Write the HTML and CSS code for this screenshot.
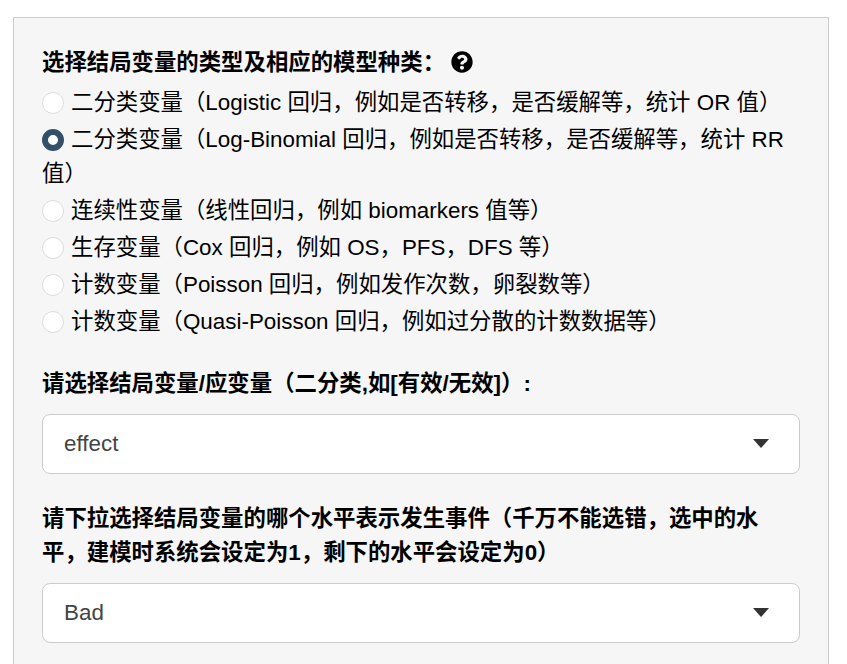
FILE: index.html
```html
<!DOCTYPE html>
<html lang="zh">
<head>
    <meta charset="UTF-8">
    <meta name="viewport" content="width=device-width, initial-scale=1.0">
    <title>模型设置</title>
    <link rel="stylesheet" href="styles.css">
</head>
<body>

    <div class="well">
        <div class="form-group">
            <label class="control-label">选择结局变量的类型及相应的模型种类：
                <svg class="help-icon" viewBox="0 0 512 512" aria-hidden="true"><path d="M504 256c0 137-111 248-248 248S8 393 8 256 119 8 256 8s248 111 248 248zM263 90c-54 0-89 23-116 64-4 5-3 12 3 16l35 26c5 4 13 3 17-2 18-23 30-36 58-36 21 0 46 13 46 33 0 15-12 23-33 34-23 13-55 30-55 72v6c0 7 5 12 12 12h56c7 0 12-5 12-12v-2c0-29 85-30 85-109 0-59-61-102-120-102zm-7 254c-26 0-47 21-47 47s21 47 47 47 47-21 47-47-21-47-47-47z"/></svg>
            </label>
            <div class="radio-list">
                <div class="radio"><span class="radio-dot"></span>二分类变量（Logistic 回归，例如是否转移，是否缓解等，统计 OR 值）</div>
                <div class="radio"><span class="radio-dot checked"></span>二分类变量（Log-Binomial 回归，例如是否转移，是否缓解等，统计 RR 值）</div>
                <div class="radio"><span class="radio-dot"></span>连续性变量（线性回归，例如 biomarkers 值等）</div>
                <div class="radio"><span class="radio-dot"></span>生存变量（Cox 回归，例如 OS，PFS，DFS 等）</div>
                <div class="radio"><span class="radio-dot"></span>计数变量（Poisson 回归，例如发作次数，卵裂数等）</div>
                <div class="radio"><span class="radio-dot"></span>计数变量（Quasi-Poisson 回归，例如过分散的计数数据等）</div>
            </div>
        </div>

        <div class="form-group">
            <label class="control-label">请选择结局变量/应变量（二分类,如[有效/无效]）:</label>
            <div class="select-box">effect</div>
        </div>

        <div class="form-group last">
            <label class="control-label">请下拉选择结局变量的哪个水平表示发生事件（千万不能选错，选中的水平，建模时系统会设定为1，剩下的水平会设定为0）</label>
            <div class="select-box">Bad</div>
        </div>
    </div>

</body>
</html>
```

FILE: styles.css
```css
html, body {
    height: 100%;
    overflow: hidden;
}
body {
    box-sizing: border-box;
    margin: 0;
    padding: 17px 18px 0 13px;
    background-color: #fff;
    font-family: "Liberation Sans", "Noto Sans CJK SC", sans-serif;
    font-size: 22.4px;
    line-height: 33.6px;
    color: #000;
}
.well {
    box-sizing: border-box;
    height: 100%;
    background-color: #f6f6f6;
    border: 1px solid #ccc;
    border-bottom: none;
    padding: 28px 28px 0;
}
.form-group {
    margin-bottom: 28px;
}
.form-group.last {
    margin-bottom: 0;
}
.control-label {
    display: block;
    font-weight: bold;
    margin-bottom: 6.4px;
}
.help-icon {
    width: 22px;
    height: 22px;
    vertical-align: -3px;
}
.radio-list {
    margin-bottom: 28.6px;
}
.radio {
    margin-bottom: 3.4px;
}
.radio-dot {
    display: inline-block;
    box-sizing: border-box;
    width: 22px;
    height: 22px;
    margin-right: 7px;
    vertical-align: -4px;
    border-radius: 50%;
    background-color: #fff;
    border: 1px solid #ddd;
}
.radio-dot.checked {
    border: 6.5px solid #345069;
}
.select-box {
    position: relative;
    box-sizing: border-box;
    height: 60px;
    margin-top: 14px;
    padding: 12px 21px;
    background-color: #fff;
    border: 1px solid #ccc;
    border-radius: 8px;
    color: #444;
}
.select-box::after {
    content: "";
    position: absolute;
    right: 30px;
    top: 24px;
    border-style: solid;
    border-width: 9px 8px 0 8px;
    border-color: #333 transparent transparent transparent;
}
```
